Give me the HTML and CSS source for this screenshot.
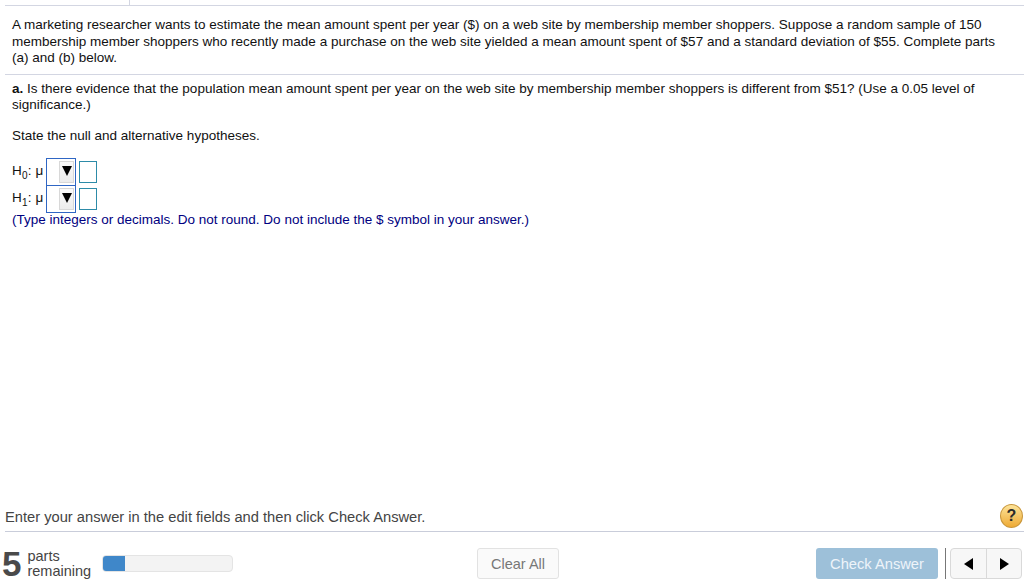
FILE: index.html
```html
<!DOCTYPE html>
<html lang="en">
<head>
    <meta charset="UTF-8">
    <title>Question</title>
    <link rel="stylesheet" href="styles.css">
</head>
<body>
    <div class="top-bar"><div class="top-tick"></div></div>

    <div class="question">
        <p class="intro">A marketing researcher wants to estimate the mean amount spent per year ($) on a web site by membership member shoppers. Suppose a random sample of 150 membership member shoppers who recently made a purchase on the web site yielded a mean amount spent of $57 and a standard deviation of $55. Complete parts (a) and (b) below.</p>
        <p class="part"><b>a.</b> Is there evidence that the population mean amount spent per year on the web site by membership member shoppers is different from $51? (Use a 0.05 level of significance.)</p>
        <p class="state">State the null and alternative hypotheses.</p>

        <div class="hypo">
            <span class="hypo-label">H<sub>0</sub>: μ</span>
            <span class="dropdown"><span class="dropdown-btn"><span class="arrow-down"></span></span></span>
            <span class="answer-box"></span>
        </div>
        <div class="hypo">
            <span class="hypo-label">H<sub>1</sub>: μ</span>
            <span class="dropdown"><span class="dropdown-btn"><span class="arrow-down"></span></span></span>
            <span class="answer-box"></span>
        </div>
        <p class="note">(Type integers or decimals. Do not round. Do not include the $ symbol in your answer.)</p>
    </div>

    <div class="hint-row">
        <span class="hint-text">Enter your answer in the edit fields and then click Check Answer.</span>
        <span class="help">?</span>
    </div>

    <div class="footer">
        <div class="parts">
            <span class="parts-num">5</span>
            <span class="parts-text">parts<br>remaining</span>
            <div class="progress"><div class="progress-fill"></div></div>
        </div>
        <button class="btn-clear">Clear All</button>
        <div class="footer-right">
            <button class="btn-check">Check Answer</button>
            <div class="nav">
                <span class="nav-btn"><span class="arrow-left"></span></span>
                <span class="nav-btn"><span class="arrow-right"></span></span>
            </div>
        </div>
    </div>
</body>
</html>
```

FILE: styles.css
```css
* {
    margin: 0;
    padding: 0;
    box-sizing: border-box;
}

body {
    width: 1024px;
    height: 585px;
    overflow: hidden;
    display: flex;
    flex-direction: column;
    font-family: "Liberation Sans", Arial, sans-serif;
    font-size: 13.5px;
    color: #111;
    background: #fff;
}

.top-bar {
    height: 6px;
    margin-left: 5px;
    border-bottom: 1px solid #d3d6e2;
    flex: none;
}

.top-tick {
    width: 1px;
    height: 5px;
    margin-left: 124px;
    background: #d3d6e2;
}

.question {
    flex: 1;
    padding: 11px 25px 0 12px;
    line-height: 16.5px;
}

.part {
    margin: 7px -25px 0 -7px;
    padding: 6px 25px 0 7px;
    border-top: 1px solid #d3d6e2;
}

.state {
    margin-top: 14px;
}

.hypo {
    display: flex;
    align-items: center;
    height: 27px;
}

.state + .hypo {
    margin-top: 14px;
}

.hypo-label {
    width: 34px;
    letter-spacing: 0.2px;
}

.hypo-label sub {
    font-size: 10px;
    line-height: 0;
}

.dropdown {
    width: 30px;
    height: 28px;
    border: 1px solid #2f66c4;
    margin-bottom: -1px;
    display: flex;
    align-items: center;
    justify-content: flex-end;
    padding-right: 1px;
}

.dropdown-btn {
    width: 15px;
    height: 22px;
    background: linear-gradient(#fafafa, #ececec);
    border: 1px solid #d8d8d8;
    display: flex;
    justify-content: center;
    padding-top: 4px;
}

.arrow-down {
    width: 0;
    height: 0;
    border-left: 5px solid transparent;
    border-right: 5px solid transparent;
    border-top: 10px solid #000;
}

.answer-box {
    width: 18px;
    height: 22px;
    margin-left: 3px;
    border: 1px solid #2d8ba8;
    background: #fff;
}

.note {
    color: #000080;
}

.hint-row {
    flex: none;
    height: 40px;
    margin-left: 5px;
    display: flex;
    align-items: flex-start;
    justify-content: space-between;
    border-bottom: 1px solid #c9cdda;
    color: #444;
}

.hint-text {
    font-size: 14.7px;
    line-height: 17px;
    margin-top: 17px;
}

.help {
    width: 23px;
    height: 24px;
    margin: 12px 1px 0 0;
    border-radius: 50%;
    background: linear-gradient(#fde49a, #eeaa35);
    border: 1px solid #c9963a;
    color: #2b2b2b;
    font-weight: bold;
    font-size: 16px;
    display: flex;
    align-items: center;
    justify-content: center;
}

.footer {
    flex: none;
    height: 53px;
    padding-top: 10px;
    display: grid;
    grid-template-columns: 1fr auto 1fr;
    align-items: center;
}

.parts {
    display: flex;
    align-items: center;
    padding-left: 2px;
    color: #444;
}

.parts-num {
    font-size: 35px;
    font-weight: bold;
    line-height: 1;
    color: #4a4a4a;
}

.parts-text {
    margin-left: 6px;
    font-size: 14.5px;
    line-height: 15px;
}

.progress {
    width: 131px;
    height: 17px;
    margin-left: 11px;
    background: #f3f3f3;
    border: 1px solid #e4e4e4;
    border-radius: 4px;
    overflow: hidden;
}

.progress-fill {
    width: 22px;
    height: 100%;
    background: #3f87c9;
}

.btn-clear {
    width: 82px;
    height: 31px;
    margin-left: 12px;
    font: 14.5px "Liberation Sans", Arial, sans-serif;
    color: #777;
    background: #fafafa;
    border: 1px solid #e2e2e2;
    border-radius: 3px;
}

.footer-right {
    display: flex;
    justify-content: flex-end;
    align-items: center;
}

.btn-check {
    width: 122px;
    height: 31px;
    font: 14.7px "Liberation Sans", Arial, sans-serif;
    color: #eef4f9;
    background: #9dc0d9;
    border: none;
    border-radius: 3px;
}

.nav {
    display: flex;
    height: 31px;
    margin: 0 2px 0 12px;
    position: relative;
    border: 1px solid #d9d9d9;
    border-radius: 4px;
    background: #f7f7f7;
}

.nav::before {
    content: "";
    position: absolute;
    left: -6px;
    top: -1px;
    height: 31px;
    width: 1px;
    background: #777;
}

.nav-btn {
    width: 35px;
    display: flex;
    align-items: center;
    justify-content: center;
}

.nav-btn + .nav-btn {
    border-left: 1px solid #d9d9d9;
}

.arrow-left {
    width: 0;
    height: 0;
    border-top: 6px solid transparent;
    border-bottom: 6px solid transparent;
    border-right: 9px solid #000;
}

.arrow-right {
    width: 0;
    height: 0;
    border-top: 6px solid transparent;
    border-bottom: 6px solid transparent;
    border-left: 9px solid #000;
}
```
